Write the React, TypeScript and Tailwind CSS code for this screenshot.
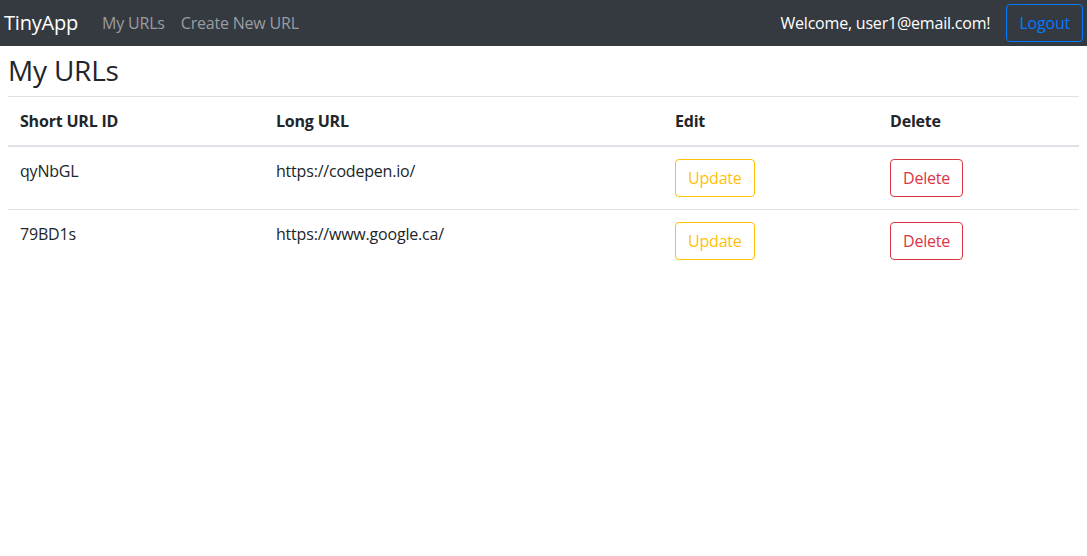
import React from 'react';

const urls = [
  { id: 'qyNbGL', longURL: 'https://codepen.io/' },
  { id: '79BD1s', longURL: 'https://www.google.ca/' },
];

function Navbar() {
  return (
    <nav className="flex h-[46px] items-center justify-between bg-[#343a40] px-1">
      <div className="flex items-center">
        <a href="#" className="mr-4 text-[20px] leading-[30px] text-white">
          TinyApp
        </a>
        <a href="#" className="px-2 text-[16px] leading-6 text-[#9a9da0]">
          My URLs
        </a>
        <a href="#" className="px-2 text-[16px] leading-6 text-[#9a9da0]">
          Create New URL
        </a>
      </div>
      <div className="flex items-center">
        <span className="mr-4 text-[16px] leading-6 text-white">Welcome, user1@email.com!</span>
        <button className="h-[38px] rounded-[4px] border border-[#007bff] px-3 text-[16px] leading-6 text-[#007bff]">
          Logout
        </button>
      </div>
    </nav>
  );
}

export default function App() {
  return (
    <div className="min-h-screen bg-white tracking-[-0.2px] text-[#212529] [font-family:'Open_Sans',sans-serif]">
      <Navbar />
      <main className="px-2 pt-2">
        <h2 className="mb-2 text-[28px] font-medium leading-[1.2]">My URLs</h2>
        <table className="w-full border-collapse text-left text-[16px] leading-6">
          <colgroup>
            <col className="w-[256px]" />
            <col className="w-[399px]" />
            <col className="w-[215px]" />
            <col />
          </colgroup>
          <thead>
            <tr>
              <th className="border-t border-b-2 border-[#dee2e6] p-3 font-bold">Short URL ID</th>
              <th className="border-t border-b-2 border-[#dee2e6] p-3 font-bold">Long URL</th>
              <th className="border-t border-b-2 border-[#dee2e6] p-3 font-bold">Edit</th>
              <th className="border-t border-b-2 border-[#dee2e6] p-3 font-bold">Delete</th>
            </tr>
          </thead>
          <tbody>
            {urls.map((u, i) => (
              <tr key={u.id}>
                <td className={`${i > 0 ? 'border-t border-[#dee2e6]' : ''} p-3 align-top`}>{u.id}</td>
                <td className={`${i > 0 ? 'border-t border-[#dee2e6]' : ''} p-3 align-top`}>{u.longURL}</td>
                <td className={`${i > 0 ? 'border-t border-[#dee2e6]' : ''} p-3 align-top`}>
                  <button className="h-[38px] rounded-[4px] border border-[#ffc107] px-3 text-[#ffc107]">
                    Update
                  </button>
                </td>
                <td className={`${i > 0 ? 'border-t border-[#dee2e6]' : ''} p-3 align-top`}>
                  <button className="h-[38px] rounded-[4px] border border-[#dc3545] px-3 text-[#dc3545]">
                    Delete
                  </button>
                </td>
              </tr>
            ))}
          </tbody>
        </table>
      </main>
    </div>
  );
}
